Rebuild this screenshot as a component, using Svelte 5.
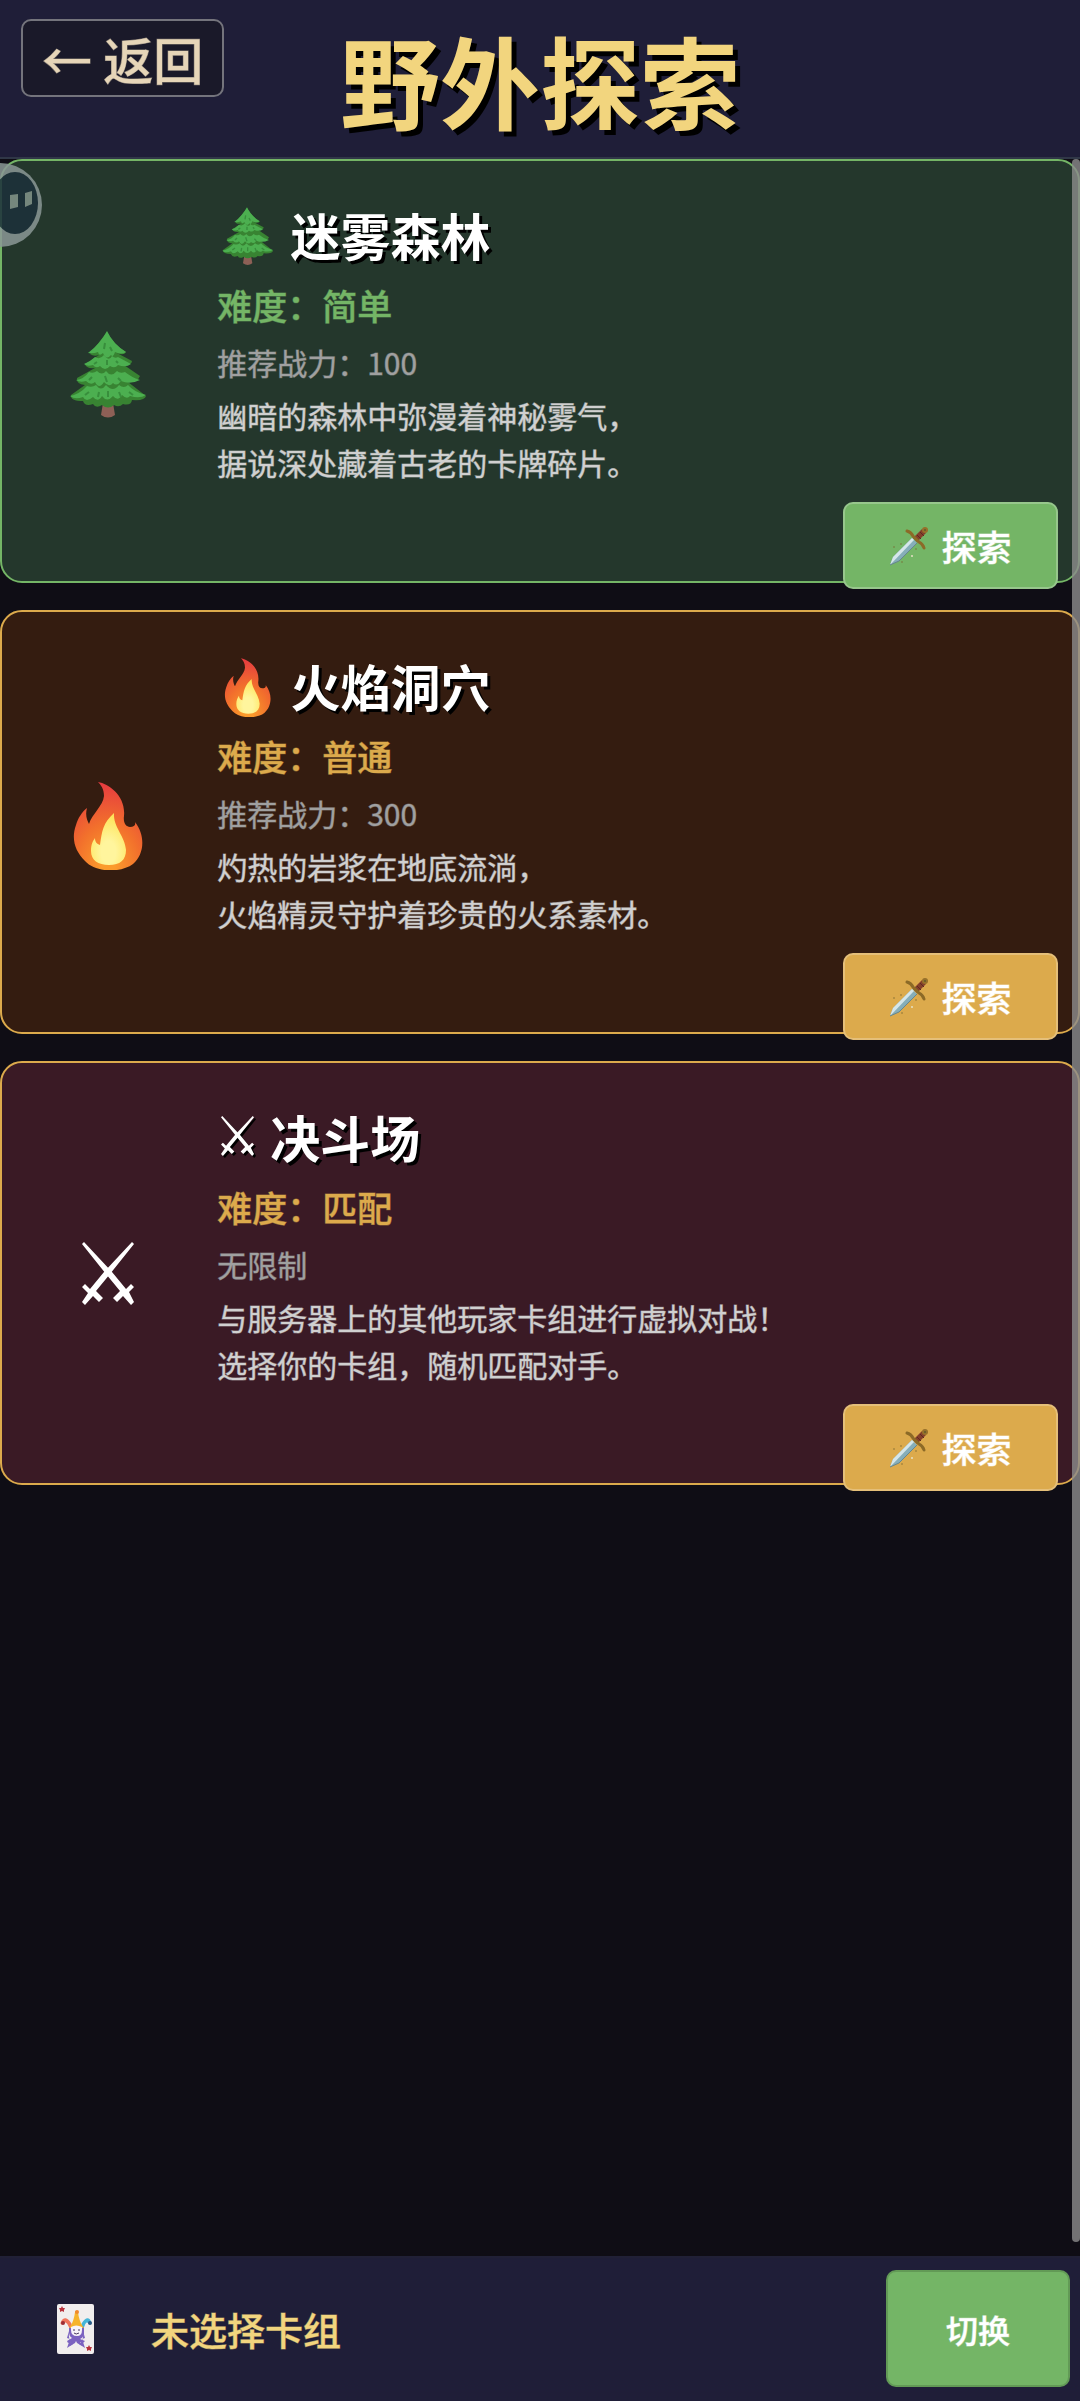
<script lang="ts">
    type Area = {
        id: string;
        icon: 'tree' | 'fire' | 'swords';
        name: string;
        level: string;
        power: string;
        desc: string[];
    };

    const areas: Area[] = [
        {
            id: 'forest',
            icon: 'tree',
            name: '迷雾森林',
            level: '简单',
            power: '推荐战力：100',
            desc: ['幽暗的森林中弥漫着神秘雾气，', '据说深处藏着古老的卡牌碎片。']
        },
        {
            id: 'cave',
            icon: 'fire',
            name: '火焰洞穴',
            level: '普通',
            power: '推荐战力：300',
            desc: ['灼热的岩浆在地底流淌，', '火焰精灵守护着珍贵的火系素材。']
        },
        {
            id: 'arena',
            icon: 'swords',
            name: '决斗场',
            level: '匹配',
            power: '无限制',
            desc: ['与服务器上的其他玩家卡组进行虚拟对战！', '选择你的卡组，随机匹配对手。']
        }
    ];
</script>

{#snippet areaIcon(icon: Area['icon'])}
    {#if icon === 'tree'}
        <svg class="icon" viewBox="-2 -8 80 96" aria-hidden="true">
            <path d="M33 72h10l2 12q-7 5-14 0z" fill="#8d6056" />
            <path d="M37 1L20 23q4 3 9 1l-14 9q1 5 10 4L7 47q-1 6 8 7L1 64q-1 6 12 6 2 6 10 3 3 5 9 1 6 5 12 0 5 3 9-1 8 2 9-4 13 1 14-4l-18-14q10 0 12-6L54 34q8 0 8-4L47 22q7 3 9-1Q44 14 37 1z" fill="#388332" />
            <path d="M37 0Q30 13 18 22q5 1 10-1 1 5 5 1 3 8 8 2 2 3 4-3 7 3 11 0Q43 13 37 0z" fill="#4caf50" />
            <path d="M25 26q-5 5-11 7 3 3 9 1 3 4 7 1 5 6 10 0 5 3 8-1 8 3 13-1l-13-7q-3 2-6-1-3 6-8-1-4 5-9 2z" fill="#4caf50" />
            <path d="M19 41Q14 48 6 49q4 3 10 1 5 5 9 1 4 8 9 0 5 6 9 1 4 4 8-2 9 4 19-1-9-3-15-8-5 2-8-1-6 7-11 0-4 5-9 0-4 3-8 1z" fill="#4caf50" />
            <path d="M17 55Q10 63 0 65q5 4 13 1 3 6 10 0 5 6 9-1 5 7 11 0 5 6 9-1 5 5 8 1 10 3 16-1-12-3-18-10-4 4-9 0-6 8-13 0-5 7-10 0-4 3-9 1z" fill="#4caf50" />
            <path d="M35 12l-1 6m6-2l2 4M27 31l-3 2m13-4v5m9-4l2 2M22 46l-3 3m16-4l2 6m11-4l3 3M19 61l-4 3m14-3l-1 5m10-6v6m11-5l2 5m8-5l4 3" stroke="#388e3c" stroke-width="2" fill="none" />
        </svg>
    {:else if icon === 'fire'}
        <svg class="icon" viewBox="-2 -8 80 96" aria-hidden="true">
            <defs>
                <radialGradient id="flame" cx="0.5" cy="0.95" r="0.95">
                    <stop offset="0.1" stop-color="#fb9b2c" />
                    <stop offset="0.5" stop-color="#f2702c" />
                    <stop offset="1" stop-color="#e53a40" />
                </radialGradient>
                <radialGradient id="core" cx="0.5" cy="0.75" r="0.7">
                    <stop offset="0.3" stop-color="#fff59d" />
                    <stop offset="1" stop-color="#fee45a" />
                </radialGradient>
            </defs>
            <path d="M28 0c11 2 28 14 26 34-1 7 2 11 6 11 4 0 6-2 5-5 11 14 9 33-2 42-12 9-37 9-48-3C5 69 1 57 6 43c2-7 6-13 11-17-2 7 0 12 2 16 3-10 14-18 15-28C34 7 31 3 28 0z" fill="url(#flame)" />
            <path d="M44 31c-1 14 11 23 12 37 0 10-6 15-17 15s-18-5-18-14c0-7 2-10 4-13 0 4 2 6 5 7 2-14 3-22 14-32z" fill="url(#core)" />
        </svg>
    {:else}
        <svg class="icon swords" viewBox="0 0 52 63" aria-hidden="true">
            <path d="M0 2L2 0 30 30 44 47 49 42 52 45 47 50 52 60 49 63 41 54 35 60 31 56 38 49 24 32z" />
            <path d="M52 2L50 0 22 30 8 47 3 42 0 45 6 51 0 60 3 63 11 54 17 60 21 56 14 49 28 32z" />
        </svg>
    {/if}
{/snippet}

<div class="page">
    <header class="topbar">
        <button class="back">← 返回</button>
        <h1>野外探索</h1>
    </header>

    <main class="areas">
        {#each areas as area (area.id)}
            <section class="area {area.id}">
                <div class="portrait">{@render areaIcon(area.icon)}</div>
                <div class="info">
                    <h2>{@render areaIcon(area.icon)}{area.name}</h2>
                    <p class="level">难度：{area.level}</p>
                    <p class="power">{area.power}</p>
                    <p class="desc">
                        {#each area.desc as line}<span>{line}</span>{/each}
                    </p>
                </div>
                <button class="explore">
                    <svg class="dagger" viewBox="0 0 40 40" aria-hidden="true">
                        <path d="M1 39L4 31 23 12 28 17 10 35z" fill="#86aeb9" />
                        <path d="M1 39L4 31 23 12 25 14z" fill="#d5e6ea" />
                        <path d="M1 39L10 35 28 17" fill="none" stroke="#66868c" stroke-width="1" />
                        <path d="M24 12L33 3 37 7 28 16z" fill="#85402b" />
                        <path d="M28 9l4 4M31 6l4 4" stroke="#5e2b20" stroke-width="1" />
                        <path d="M18 5q4 1 6 5l6 6q4 2 5 6" fill="none" stroke="#8c6a27" stroke-width="3" stroke-linecap="round" />
                        <circle cx="36" cy="4" r="3" fill="#96702a" />
                        <circle cx="36" cy="4" r="1" fill="#5f5a2c" />
                        <g fill="#79662f" opacity="0.5">
                            <circle cx="5" cy="21" r="1" />
                            <circle cx="12" cy="18" r="1" />
                            <circle cx="27" cy="23" r="1" />
                            <circle cx="13" cy="36" r="1" />
                        </g>
                        <circle cx="23" cy="30" r="1" fill="#e6e0c4" />
                    </svg>
                    探索
                </button>
            </section>
        {/each}
        <div class="scrollbar"></div>
    </main>

    <footer class="deckbar">
        <svg class="joker" viewBox="0 0 37 50" aria-hidden="true">
            <rect width="37" height="50" rx="2" fill="#f1eeee" />
            <path d="M5 2l1 2h2l-1 2v2L5 7 3 8V6L2 4h2zM32 41l1 2h2l-1 2v2l-2-1-2 1v-2l-1-2h2z" fill="#b8333d" />
            <path d="M12 27Q11 38 16 40L10 44 13 35 10 34zM26 27Q27 38 22 40L28 44 25 35 28 34z" fill="#7b62c0" />
            <path d="M12 22h15v8q-1 4-4 5l5 2-2 2-3-1 2 4-5-3-1-2-1 2-5 3 1-4-3 1-1-2 5-3q-3-2-3-5z" fill="#7b62c0" />
            <path d="M13 22V20Q8 12 5 19 10 14 13 22z" fill="#f0735a" stroke="#f0735a" stroke-width="3" stroke-linejoin="round" />
            <path d="M26 22V20Q31 12 33 19 28 14 26 22z" fill="#45b5d8" stroke="#45b5d8" stroke-width="3" stroke-linejoin="round" />
            <path d="M14 23Q18 17 19 8h1q1 9 5 15z" fill="#f6b42c" stroke="#f6b42c" stroke-width="2" />
            <circle cx="20" cy="8" r="2" fill="#f08a2c" />
            <circle cx="6" cy="19" r="2" fill="#9c2c35" />
            <circle cx="33" cy="19" r="2" fill="#2c5a86" />
            <path d="M14 23q5-3 11 0v3q0 6-5 6-6 0-6-6z" fill="#f7f3f8" />
            <path d="M16 26h2m3 0h2m-6 3q2 2 5 0" stroke="#493a63" stroke-width="1" fill="none" />
        </svg>
        <span class="deck-name">未选择卡组</span>
        <button class="switch">切换</button>
    </footer>

    <!-- floating assistant docked at the left edge -->
    <svg class="bubble" viewBox="0 0 44 88" aria-hidden="true">
        <circle cx="0" cy="44" r="42" fill="#8b9896" />
        <ellipse cx="15" cy="42" rx="23" ry="31" fill="#1c303b" />
        <path d="M10 34l8-1v13l-8 2zM25 32l7-2v13l-7 3z" fill="#84958c" />
    </svg>
</div>

<style>
    :global(body) {
        margin: 0;
        background: #0f0d15;
    }

    .page {
        position: relative;
        display: flex;
        flex-direction: column;
        min-height: 100vh;
        color: #fff;
        font-family: "Noto Sans CJK SC", sans-serif;
        font-weight: 500;
    }

    h1, h2, p {
        margin: 0;
    }

    button {
        box-sizing: border-box;
        padding: 0;
        font-family: inherit;
        font-weight: 500;
        color: #fff;
        border: 2px solid rgba(255, 255, 255, 0.25);
        border-radius: 10px;
    }

    /* slightly heavier strokes for the small text */
    button, p, .deck-name {
        -webkit-text-stroke: 1px color-mix(in srgb, currentColor 50%, transparent);
    }

    .topbar {
        position: relative;
        display: flex;
        justify-content: center;
        background: #1f1e38;
        border-bottom: 2px solid #303747;
    }

    .back {
        position: absolute;
        top: 19px;
        left: 21px;
        padding: 0 19px;
        font-size: 50px;
        line-height: 74px;
        color: #e6d5b8;
        background: #1a1929;
        border-color: #74747c;
    }

    h1 {
        padding-top: 1px;
        font-size: 100px;
        font-weight: 700;
        line-height: 156px;
        color: #f2d57e;
        text-shadow: 5px 5px 0 #000;
    }

    .areas {
        position: relative;
        flex: 1;
        display: flex;
        flex-direction: column;
        gap: 27px;
    }

    .area {
        --accent: #dcaa4c;
        position: relative;
        box-sizing: border-box;
        display: flex;
        min-height: 424px;
        border: 2px solid var(--accent);
        border-radius: 22px;
    }

    .forest {
        --accent: #74b566;
        background: #24372c;
    }

    .cave {
        background: #341c10;
    }

    .arena {
        background: #3a1a25;
    }

    .portrait {
        box-sizing: border-box;
        display: flex;
        align-items: center;
        justify-content: center;
        width: 20%;
        padding-right: 4px;
    }

    .icon {
        height: 96px;
    }

    .icon.swords {
        height: 63px;
        fill: #fff;
    }

    .info {
        padding-top: 39px;
    }

    h2 {
        display: flex;
        align-items: center;
        gap: 16px;
        padding: 0 0 4px 4px;
        font-size: 50px;
        font-weight: 700;
        line-height: 68px;
        text-shadow: 3px 3px 0 #000;
    }

    h2 .icon {
        height: 64px;
    }

    h2 .icon.swords {
        height: 40px;
        filter: drop-shadow(2px 2px 0 #000);
    }

    .level {
        font-size: 35px;
        line-height: 66px;
        color: var(--accent);
    }

    .power {
        font-size: 30px;
        font-weight: 400;
        line-height: 48px;
        color: #a0a0a0;
    }

    .desc {
        padding-top: 6px;
        font-size: 30px;
        font-weight: 400;
        line-height: 47px;
        color: #d0d0d0;
    }

    .desc span {
        display: block;
    }

    .explore {
        position: absolute;
        right: 20px;
        bottom: -8px;
        display: flex;
        align-items: center;
        justify-content: center;
        gap: 12px;
        width: 20%;
        height: 87px;
        font-size: 35px;
        background: var(--accent);
    }

    .dagger {
        width: 40px;
    }

    .scrollbar {
        position: absolute;
        top: 0;
        right: 0;
        bottom: 14px;
        width: 8px;
        border-radius: 4px;
        background: rgba(140, 140, 140, 0.8);
    }

    .deckbar {
        display: flex;
        align-items: center;
        padding: 12px 10px 14px 57px;
        background: #1f1e38;
        border-top: 2px solid #212036;
    }

    .joker {
        width: 37px;
    }

    .deck-name {
        flex: 1;
        padding-left: 57px;
        font-size: 38px;
        color: #f2d57e;
    }

    .switch {
        width: 184px;
        height: 117px;
        font-size: 32px;
        background: #74b566;
        border-color: rgba(0, 0, 0, 0.15);
    }

    .bubble {
        position: absolute;
        top: 161px;
        left: 0;
        width: 44px;
        opacity: 0.85;
    }
</style>
